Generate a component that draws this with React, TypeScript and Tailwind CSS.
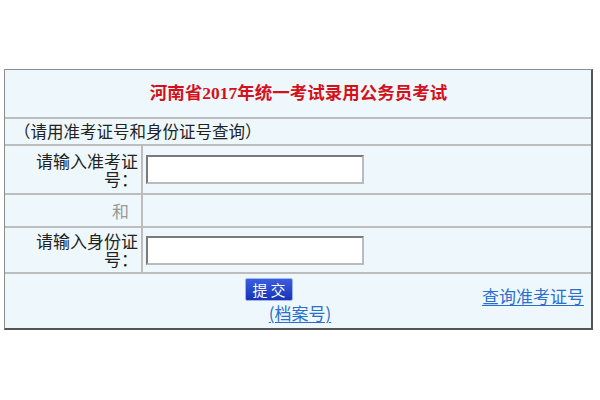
export default function App() {
  const font = { fontFamily: '"Noto Sans CJK SC", "Liberation Sans", sans-serif' };
  return (
    <div className="w-[600px] h-[400px] bg-white pt-[69px] pl-[4px]" style={font}>
      <div className="w-[589px] h-[261px] border border-[#8c8c8c] border-r-2 border-b-2 border-r-[#555] border-b-[#555] bg-[#eef8fc] flex flex-col">
        {/* title */}
        <div className="h-[49px] flex items-center justify-center border-b-2 border-[#bdbdbd]">
          <span
            className="text-[17.5px] font-bold text-[#d4101a] pl-[1px]"
            style={{ fontFamily: '"Liberation Serif", "Noto Sans CJK SC", serif' }}
          >
            河南省2017年统一考试录用公务员考试
          </span>
        </div>

        <div className="h-[27px] flex items-center pl-[9px] text-[16.5px] text-[#222] border-b-2 border-[#bdbdbd]">
          （请用准考证号和身份证号查询）
        </div>

        {/* admission number */}
        <div className="h-[49px] flex border-b-2 border-[#bdbdbd]">
          <div className="w-[138px] shrink-0 border-r-2 border-[#bdbdbd] flex items-center justify-end pr-[3px]">
            <div className="w-[104px] text-right text-[17px] leading-[18px] text-[#222]">请输入准考证号：</div>
          </div>
          <div className="flex items-center pl-[3px]">
            <input className="w-[218px] h-[29px] bg-white border-2 border-t-[#7a7a7a] border-l-[#7a7a7a] border-r-[#bbb] border-b-[#bbb] outline-none" />
          </div>
        </div>

        <div className="h-[33px] flex border-b-2 border-[#bdbdbd]">
          <div className="w-[138px] shrink-0 border-r-2 border-[#bdbdbd] flex items-center justify-end pr-[12px] text-[17px] text-[#999]">
            和
          </div>
          <div className="flex-1" />
        </div>

        {/* id number */}
        <div className="h-[46px] flex border-b-2 border-[#bdbdbd]">
          <div className="w-[138px] shrink-0 border-r-2 border-[#bdbdbd] flex items-center justify-end pr-[3px]">
            <div className="w-[104px] text-right text-[17px] leading-[18px] text-[#222]">请输入身份证号：</div>
          </div>
          <div className="flex items-center pl-[3px]">
            <input className="w-[218px] h-[29px] bg-white border-2 border-t-[#7a7a7a] border-l-[#7a7a7a] border-r-[#bbb] border-b-[#bbb] outline-none" />
          </div>
        </div>

        {/* actions */}
        <div className="flex-1 flex flex-col">
          <div className="flex items-start pt-[4px]">
            <button className="ml-[240px] w-[48px] h-[23px] rounded-[2px] border border-[#9fb4f0] bg-gradient-to-b from-[#3b5ee0] to-[#1633b8] text-white text-[15px] leading-[20px] tracking-[3px] pl-[3px]">
              提交
            </button>
            <a href="#" className="ml-auto mr-[7px] mt-[9px] text-[17px] leading-[18px] text-[#2a6fd0] underline underline-offset-2">
              查询准考证号
            </a>
          </div>
          <div className="flex justify-center pl-[4px] -mt-[1px]">
            <a href="#" className="text-[17px] leading-[18px] text-[#2a6fd0] underline underline-offset-2">
              (档案号)
            </a>
          </div>
        </div>
      </div>
    </div>
  );
}
